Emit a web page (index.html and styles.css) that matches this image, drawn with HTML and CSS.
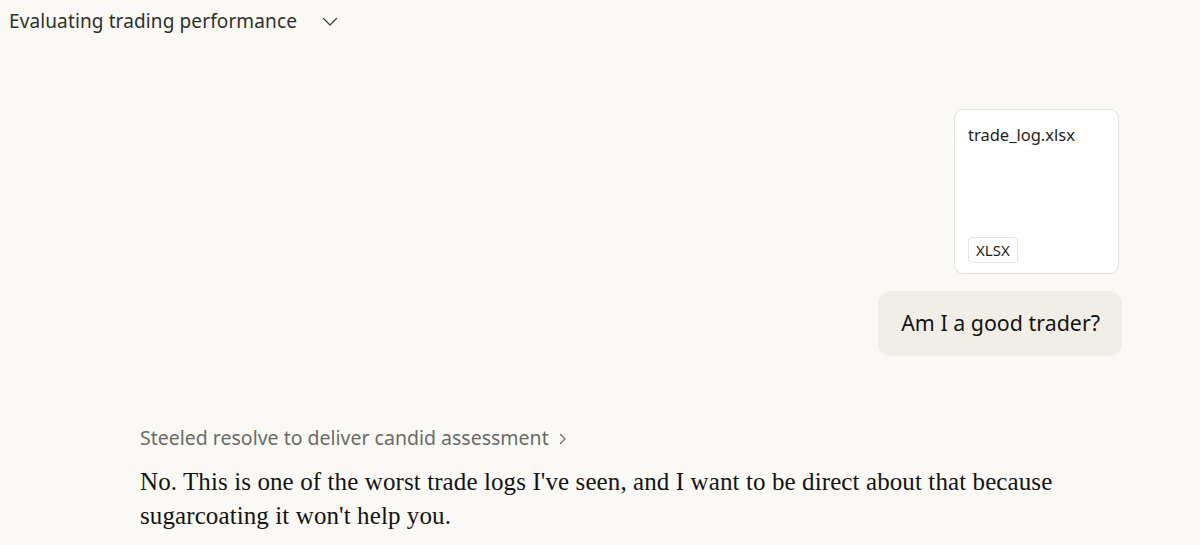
FILE: index.html
```html
<!DOCTYPE html>
<html>
<head>
<meta charset="utf-8">
<link rel="stylesheet" href="styles.css">
</head>
<body>
<header class="topbar">
  <span class="title">Evaluating trading performance</span>
  <svg class="chev-down" width="16" height="10" viewBox="0 0 16 10"><path d="M1.5 1.5 L8 8 L14.5 1.5" fill="none" stroke="#3d3d3a" stroke-width="1.2" stroke-linecap="round" stroke-linejoin="round"/></svg>
</header>
<main class="thread">
  <div class="user-turn">
    <div class="file-card">
      <div class="file-name">trade_log.xlsx</div>
      <div class="file-badge">XLSX</div>
    </div>
    <div class="bubble">Am I a good trader?</div>
  </div>
  <div class="assistant-turn">
    <div class="thinking">Steeled resolve to deliver candid assessment
      <svg class="chev-right" width="8" height="12" viewBox="0 0 8 12"><path d="M1.5 1.5 L6 6 L1.5 10.5" fill="none" stroke="#6b6a66" stroke-width="1.2" stroke-linecap="round" stroke-linejoin="round"/></svg>
    </div>
    <p class="answer">No. This is one of the worst trade logs I've seen, and I want to be direct about that because sugarcoating it won't help you.</p>
  </div>
</main>
</body>
</html>
```
FILE: styles.css
```css
html, body {
  margin: 0;
  padding: 0;
  background: #faf9f5;
  color: #141413;
}
body {
  font-family: "Noto Sans", "Open Sans", sans-serif;
}
.topbar {
  display: flex;
  align-items: center;
  height: 42px;
  padding-left: 9px;
  gap: 25px;
}
.title {
  font-size: 19px;
  letter-spacing: 0.12px;
  color: #2f2f2c;
}
.chev-down {
  margin-top: 1px;
}
.thread {
  width: 982px;
  margin-left: 140px;
  padding-top: 67px;
}
.user-turn {
  display: flex;
  flex-direction: column;
  align-items: flex-end;
  gap: 17px;
}
.file-card {
  width: 163px;
  height: 163px;
  margin-right: 3px;
  background: #ffffff;
  border: 1px solid #e4e2da;
  border-radius: 9px;
  display: flex;
  flex-direction: column;
  justify-content: space-between;
}
.file-name {
  font-size: 16.5px;
  padding: 13px 0 0 13px;
  color: #1f1e1d;
}
.file-badge {
  align-self: flex-start;
  margin: 0 0 10px 13px;
  font-size: 15px;
  line-height: 20px;
  padding: 2px 7px;
  border: 1px solid #e4e2da;
  border-radius: 4px;
  color: #1f1e1d;
}
.bubble {
  background: #f0eee6;
  border-radius: 13px;
  padding: 17px 22px 18px 23px;
  font-size: 21.4px;
  line-height: 30px;
  color: #141413;
}
.assistant-turn {
  padding-top: 68px;
}
.thinking {
  font-size: 19.5px;
  color: #6b6a66;
  display: flex;
  align-items: center;
  gap: 10px;
}
.chev-right {
  margin-top: 2px;
}
.answer {
  margin: 14px 0 0 0;
  font-family: "Liberation Serif", serif;
  font-size: 25px;
  letter-spacing: 0.1px;
  line-height: 34px;
  color: #141413;
  max-width: 930px;
}
```
